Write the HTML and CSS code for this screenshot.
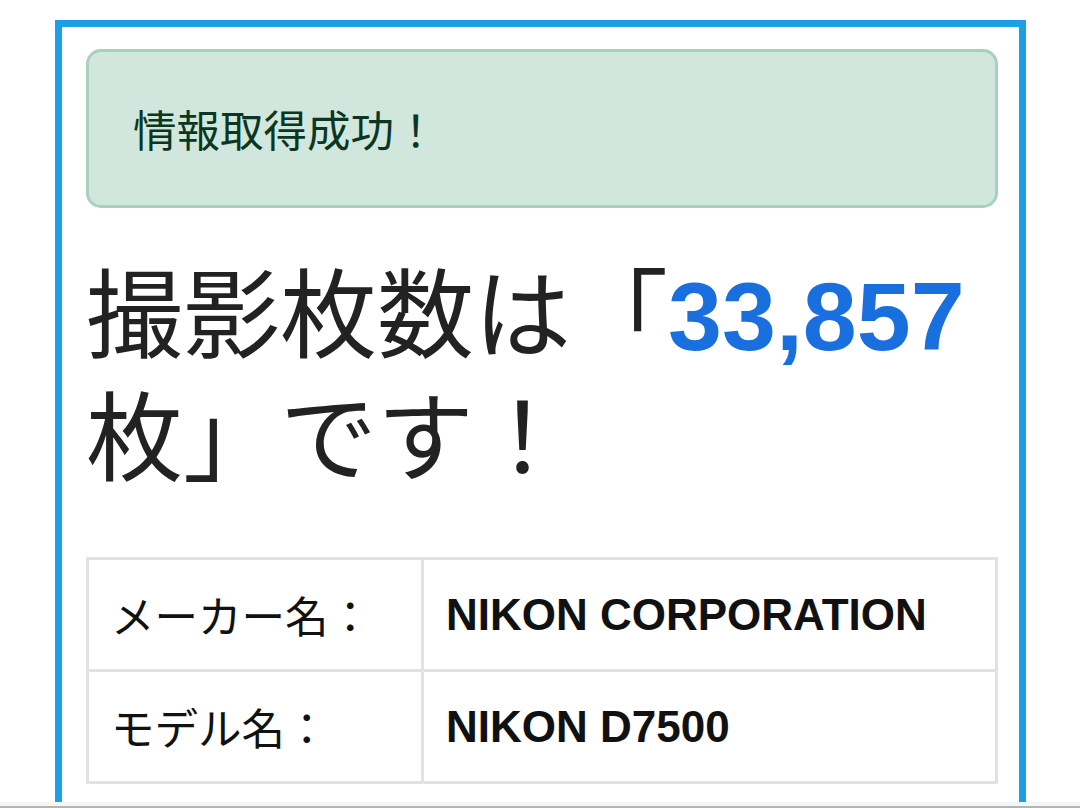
FILE: index.html
```html
<!DOCTYPE html>
<html lang="ja">
<head>
    <meta charset="UTF-8">
    <meta name="viewport" content="width=device-width, initial-scale=1.0">
    <title>撮影枚数チェッカー</title>
    <link rel="stylesheet" href="styles.css">
</head>
<body>
    <div class="container">
        <!-- result message -->
        <div class="alert">情報取得成功！</div>

        <h1 class="count">撮影枚数は「<span class="num">33,857</span>枚」です！</h1>

        <!-- camera info -->
        <table class="info">
            <tr>
                <th>メーカー名：</th>
                <td>NIKON CORPORATION</td>
            </tr>
            <tr>
                <th>モデル名：</th>
                <td>NIKON D7500</td>
            </tr>
        </table>
    </div>
    <div class="screen-edge"></div>
</body>
</html>
```

FILE: styles.css
```css
body {
    margin: 0;
    padding: 0;
    background: #fff;
    color: #212529;
    font-family: "Liberation Sans", "Noto Sans CJK JP", sans-serif;
    font-size: 43.5px;
    line-height: 1.5;
}
.container {
    margin: 20px 0 0 55px;
    padding: 22px 21px 80px 24px;
    box-sizing: border-box;
    width: 971px;
    border: 7px solid #1a9fe8;
}
.alert {
    background: #d1e7dd;
    border: 3px solid #a8d0bd;
    border-radius: 15px;
    color: #0a3622;
    padding: 44px 44px;
    font-family: "Noto Sans CJK JP", sans-serif;
    line-height: 65px;
    margin-bottom: 47px;
}
.count {
    margin: 0 0 56px;
    font-size: 97px;
    font-weight: 400;
    line-height: 123px;
    color: #222;
}
.num {
    color: #1a6fdf;
    font-weight: 700;
}
.info {
    width: 100%;
    border-collapse: collapse;
    color: #111;
}
.info th,
.info td {
    border: 3px solid #e0e2e5;
    padding: 22px 22px;
    text-align: left;
    line-height: 65px;
}
.info th {
    width: 288px;
    font-weight: 400;
    font-family: "Noto Sans CJK JP", sans-serif;
}
.info td {
    font-size: 44px;
    font-weight: 700;
}
.screen-edge {
    position: fixed;
    left: 0;
    right: 0;
    bottom: 0;
    height: 2px;
    background: #b4b4b4;
    border-top: 4px solid #f4f5f6;
}
```
